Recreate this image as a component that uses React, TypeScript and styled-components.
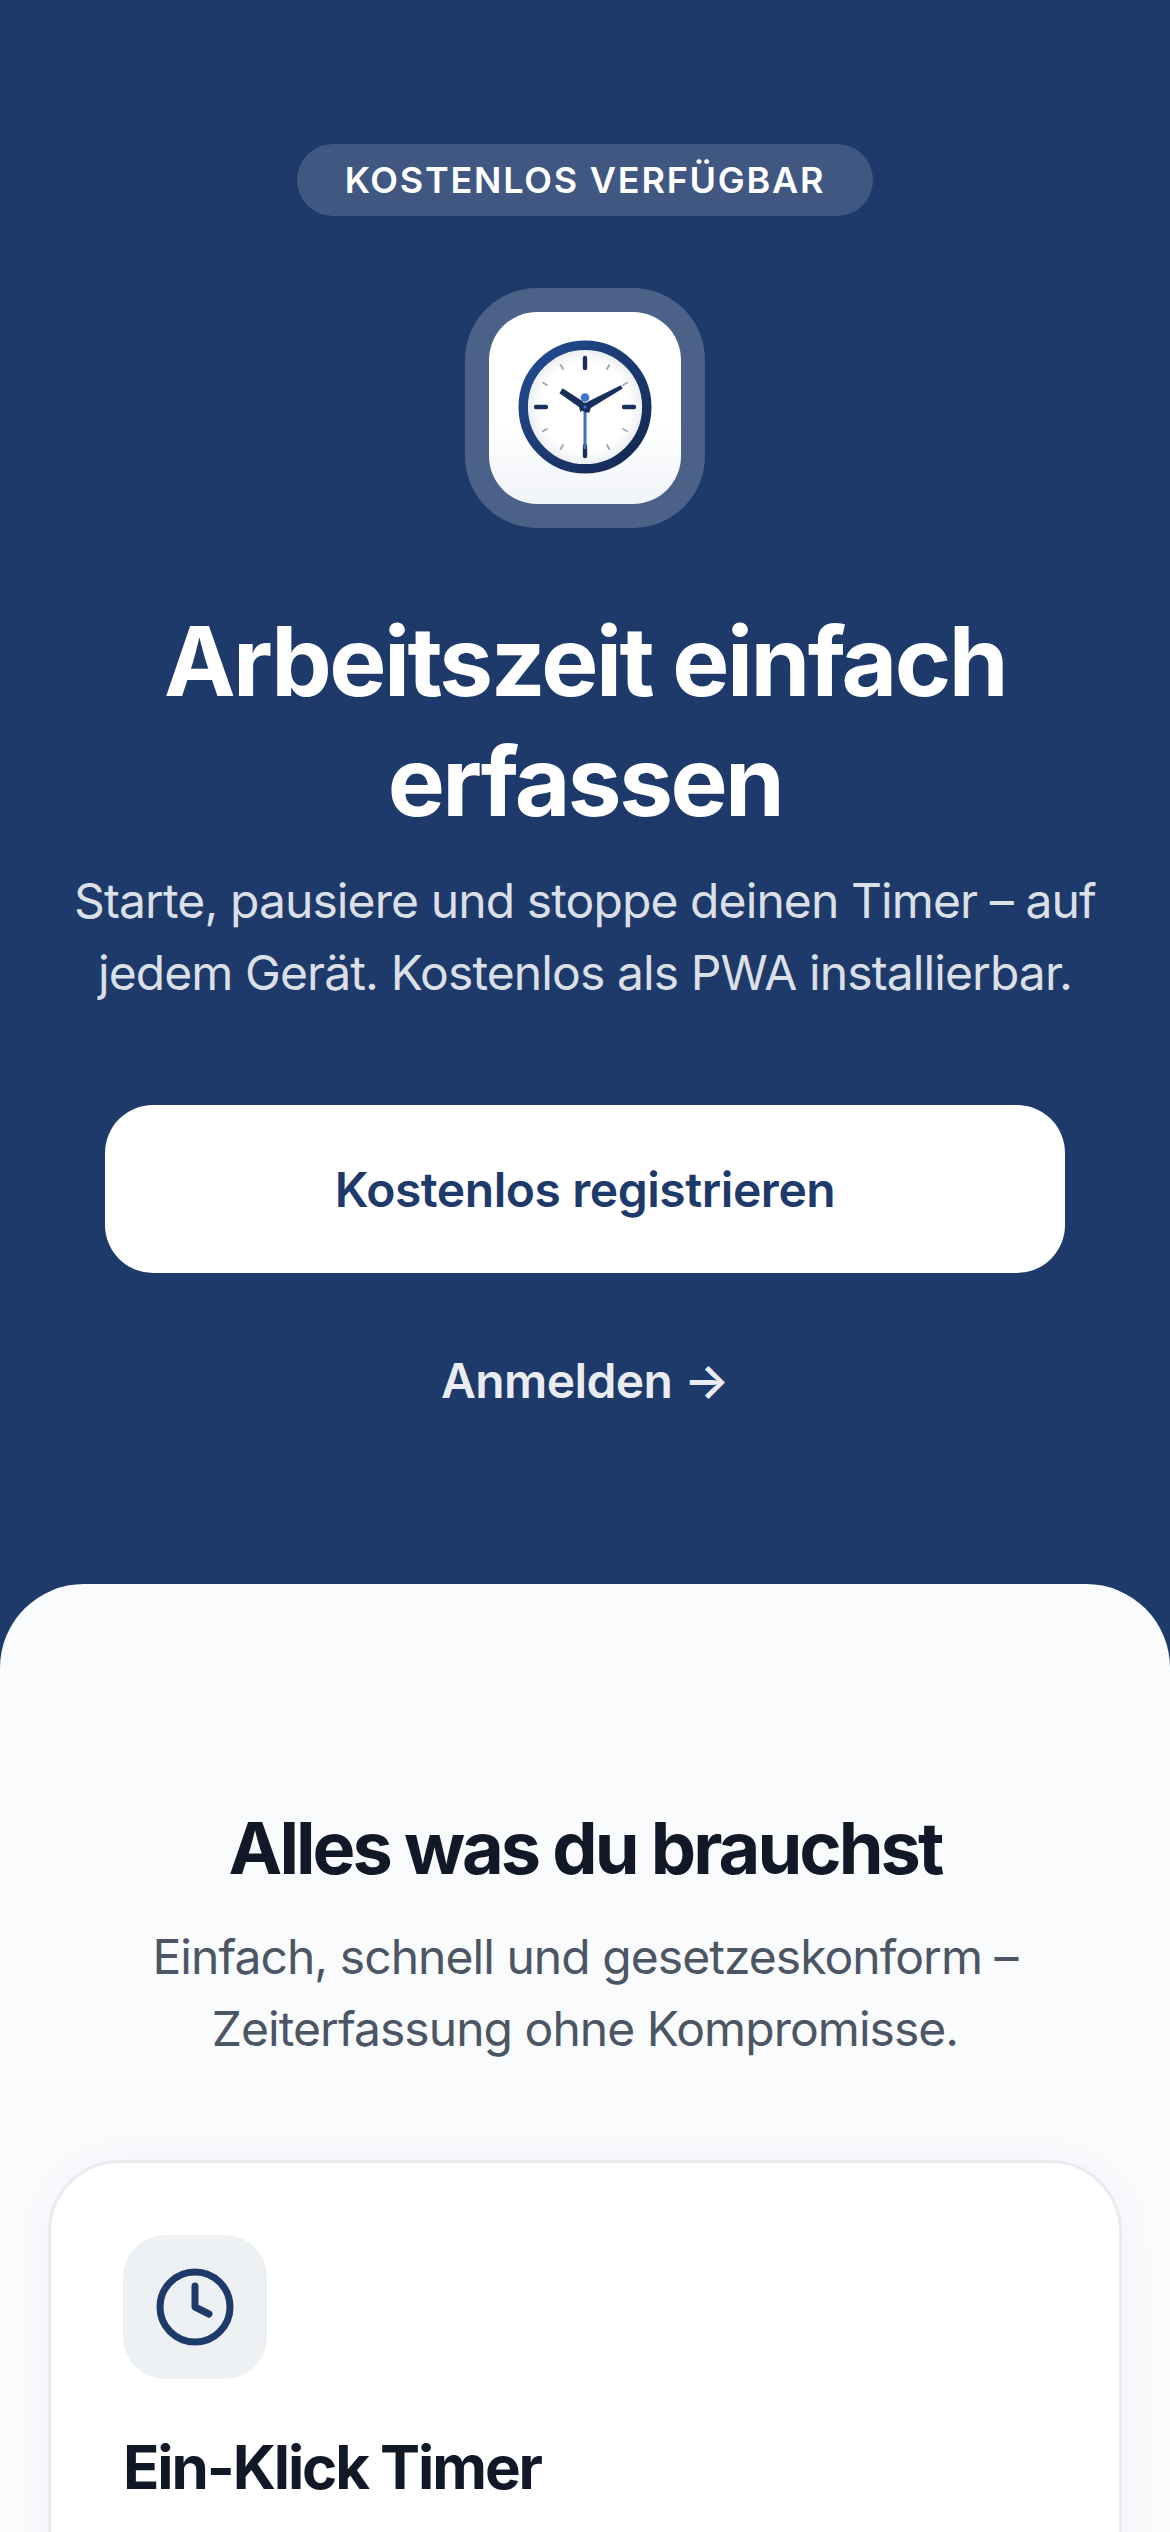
import React from "react";
import styled, { createGlobalStyle } from "styled-components";
import { Clock } from "lucide-react";

const Global = createGlobalStyle`
  html, body { margin: 0; padding: 0; background: #1e3a6b; }
  * { box-sizing: border-box; }
  body { font-family: Inter, "Noto Sans", sans-serif; -webkit-font-smoothing: antialiased; }
`;

const Page = styled.main`
  height: 2532px;
  overflow: hidden;
  background: #1e3a6b;
`;

const Hero = styled.section`
  display: flex;
  flex-direction: column;
  align-items: center;
  height: 1584px;
  padding: 144px 48px 0;
  text-align: center;
`;

const Badge = styled.span`
  display: flex;
  align-items: center;
  height: 72px;
  padding: 0 48px;
  border-radius: 36px;
  background: rgba(255, 255, 255, 0.15);
  color: #fff;
  font-size: 36px;
  font-weight: 600;
  letter-spacing: 1.78px;
`;

const IconFrame = styled.div`
  margin-top: 72px;
  padding: 24px;
  width: 240px;
  height: 240px;
  border-radius: 72px;
  background: rgba(255, 255, 255, 0.2);
`;

const IconTile = styled.div`
  width: 192px;
  height: 192px;
  border-radius: 48px;
  background: linear-gradient(180deg, #ffffff 60%, #f0f3f8 100%);
`;

const Title = styled.h1`
  margin: 73px 0 0;
  color: #fff;
  font-size: 96px;
  line-height: 120px;
  font-weight: 700;
  letter-spacing: -2.5px;
  max-width: 1000px;
`;

const Lead = styled.p`
  margin: 24px 0 0;
  color: rgba(255, 255, 255, 0.86);
  font-size: 48px;
  line-height: 72px;
  font-weight: 400;
  letter-spacing: -0.9px;
  max-width: 1074px;
`;

const Primary = styled.a`
  display: flex;
  align-items: center;
  justify-content: center;
  margin-top: 96px;
  width: 960px;
  height: 168px;
  flex: none;
  border-radius: 48px;
  background: #fff;
  color: #1e3a6b;
  font-size: 48px;
  font-weight: 600;
  letter-spacing: -0.45px;
`;

const Secondary = styled.a`
  margin-top: 72px;
  color: rgba(255, 255, 255, 0.92);
  font-size: 48px;
  line-height: 72px;
  font-weight: 600;
  letter-spacing: -0.6px;
`;

const Sheet = styled.section`
  background: #f9fbfd;
  border-radius: 84px 84px 0 0;
  padding: 216px 48px 0;
`;

const SheetHead = styled.header`
  text-align: center;
`;

const SheetTitle = styled.h2`
  margin: 0;
  color: #111827;
  font-size: 72px;
  line-height: 96px;
  font-weight: 700;
  letter-spacing: -2.95px;
`;

const SheetLead = styled.p`
  margin: 25px auto 0;
  color: #4b5563;
  font-size: 48px;
  line-height: 72px;
  letter-spacing: -0.95px;
  max-width: 960px;
`;

const Card = styled.article`
  margin-top: 95px;
  padding: 72px;
  min-height: 600px;
  background: #fff;
  border: 3px solid #e8ebf0;
  border-radius: 72px;
  box-shadow: 0 3px 48px rgba(30, 58, 107, 0.04);
`;

const FeatureIcon = styled.div`
  display: flex;
  align-items: center;
  justify-content: center;
  width: 144px;
  height: 144px;
  border-radius: 42px;
  background: #eef1f4;
  color: #1e3a6b;
`;

const CardTitle = styled.h3`
  margin: 46px 0 0;
  color: #111827;
  font-size: 60px;
  line-height: 84px;
  font-weight: 700;
  letter-spacing: -2.1px;
`;

const AppClock = () => (
  <svg width="192" height="192" viewBox="0 0 192 192" aria-hidden="true">
    <defs>
      <linearGradient id="ring" x1="0" y1="0" x2="1" y2="1">
        <stop offset="0" stopColor="#234d94" />
        <stop offset="1" stopColor="#14274f" />
      </linearGradient>
      <radialGradient id="face">
        <stop offset="0.72" stopColor="#ffffff" />
        <stop offset="1" stopColor="#e6e9f0" />
      </radialGradient>
    </defs>
    <circle cx="96" cy="95" r="61.8" fill="url(#face)" stroke="url(#ring)" strokeWidth="9.4" />
    <g stroke="#1a2f5e" strokeWidth="4.4" strokeLinecap="round">
      <line x1="96" y1="46" x2="96" y2="56" />
      <line x1="96" y1="134" x2="96" y2="144" />
      <line x1="47" y1="95" x2="57" y2="95" />
      <line x1="135" y1="95" x2="145" y2="95" />
    </g>
    <g stroke="#a3a9b5" strokeWidth="2" strokeLinecap="round">
      {[30, 60, 120, 150, 210, 240, 300, 330].map((a) => (
        <line key={a} x1="96" y1="51" x2="96" y2="46.5" transform={`rotate(${a} 96 95)`} />
      ))}
    </g>
    <line x1="96" y1="95" x2="96" y2="137" stroke="#3f6fc0" strokeWidth="3" />
    <circle cx="96" cy="85.5" r="4.3" fill="#3f74c8" />
    <path d="M73.6 76.2 L70.4 81.2 L90 95 L91.5 100.5 L94 97 L97 97 L94 89.5 Z" fill="#1a2f5e" />
    <path d="M133.7 76.5 L131.9 73.2 L98.2 90 L94 97 L96 100.5 L100.5 100.5 L101.8 96 Z" fill="#1a2f5e" />
    <circle cx="96" cy="95" r="4.5" fill="#1a2f5e" />
    <circle cx="96" cy="95" r="1.6" fill="#3f74c8" />
  </svg>
);

export default function App() {
  return (
    <Page>
      <Global />
      <Hero>
        <Badge>KOSTENLOS VERFÜGBAR</Badge>
        <IconFrame>
          <IconTile>
            <AppClock />
          </IconTile>
        </IconFrame>
        <Title>Arbeitszeit einfach erfassen</Title>
        <Lead>Starte, pausiere und stoppe deinen Timer – auf jedem Gerät. Kostenlos als PWA installierbar.</Lead>
        <Primary>Kostenlos registrieren</Primary>
        <Secondary>Anmelden →</Secondary>
      </Hero>
      <Sheet>
        <SheetHead>
          <SheetTitle>Alles was du brauchst</SheetTitle>
          <SheetLead>Einfach, schnell und gesetzeskonform – Zeiterfassung ohne Kompromisse.</SheetLead>
        </SheetHead>
        <Card>
          <FeatureIcon>
            <Clock size={84} strokeWidth={2} />
          </FeatureIcon>
          <CardTitle>Ein-Klick Timer</CardTitle>
        </Card>
      </Sheet>
    </Page>
  );
}
